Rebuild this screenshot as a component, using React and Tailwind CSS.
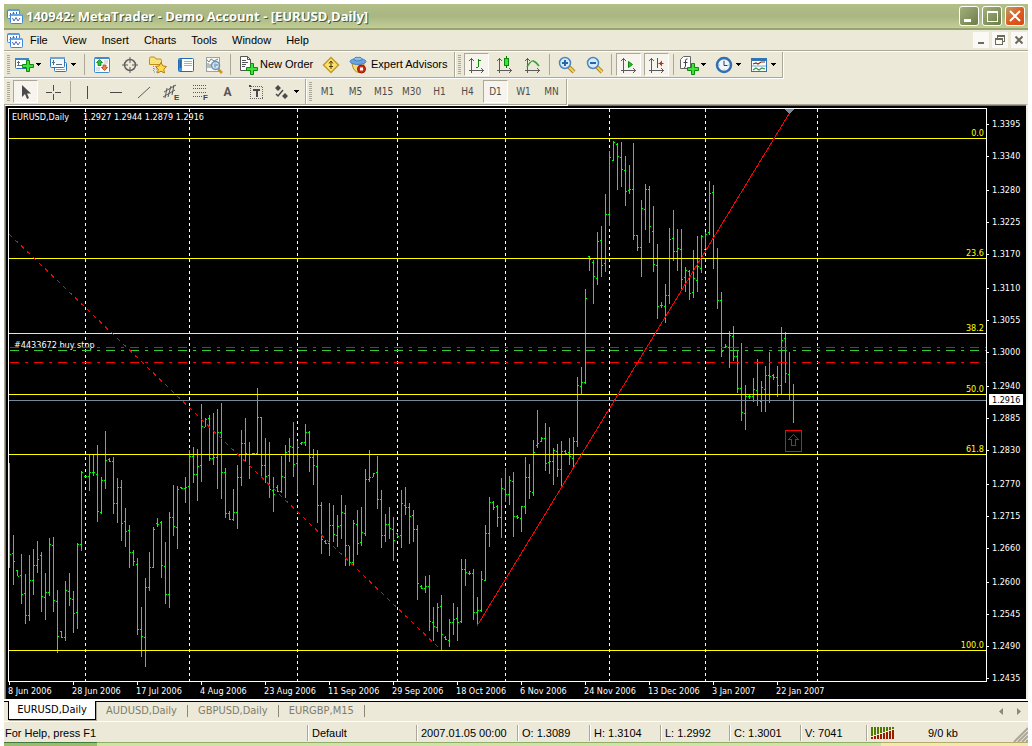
import { useState } from 'react';
import clsx from 'clsx';

// [high, low, open, close] for every daily bar, in chart pixels, oldest first. 0 = no tick
const BARS = [
  [463,568,0,554],[535,585,553,561],[570,576,570,576],[554,604,575,594],[574,624,593,615],[555,621,615,580],
  [549,595,580,565],[541,573,565,559],[552,612,555,596],[573,620,597,592],[538,596,592,544],[537,612,545,600],
  [590,653,601,636],[631,638,631,637],[581,641,637,590],[573,606,591,598],[591,633,599,613],[543,629,612,544],
  [471,551,544,472],[476,477,476,476],[455,491,476,472],[455,476,472,472],[445,522,474,511],[477,514,512,480],
  [431,489,480,460],[458,462,459,461],[457,514,461,503],[478,523,503,487],[480,541,487,523],[508,547,521,531],
  [525,568,530,552],[550,566,552,561],[558,635,564,629],[607,657,629,636],[578,667,637,587],[552,591,587,567],
  [527,568,567,529],[518,527,523,524],[521,578,522,565],[542,604,566,594],[512,608,594,517],[485,536,517,526],
  [486,549,527,489],[487,489,487,488],[477,503,488,487],[450,514,486,456],[447,483,456,474],[449,501,474,466],
  [404,482,465,426],[418,427,427,419],[415,461,418,458],[413,465,458,457],[409,489,457,432],[403,499,432,472],
  [468,518,472,513],[511,520,513,519],[489,521,519,512],[465,529,512,477],[430,486,477,443],[418,461,443,453],
  [442,479,454,454],[453,454,453,453],[388,454,453,417],[417,477,417,465],[438,483,465,476],[442,498,475,489],
  [477,512,490,494],[485,492,487,491],[456,493,491,476],[445,498,477,452],[438,462,451,446],[422,477,447,464],
  [441,494,463,447],[442,445,443,442],[424,446,442,432],[431,472,432,457],[449,485,457,465],[450,523,466,505],
  [502,554,505,539],[540,544,541,543],[503,556,543,525],[505,542,525,534],[515,547,535,526],[495,539,525,512],
  [505,566,513,545],[546,566,545,562],[520,566,562,523],[510,555,524,543],[507,546,542,532],[469,536,533,479],
  [450,482,479,477],[473,477,477,473],[456,509,472,499],[490,548,499,535],[514,542,535,524],[507,539,524,528],
  [517,561,529,540],[533,537,533,536],[490,548,535,503],[487,515,505,507],[503,544,507,516],[510,542,515,529],
  [525,600,529,583],[585,589,586,588],[576,593,588,586],[575,631,586,621],[607,641,622,626],[603,632,627,607],
  [595,650,606,634],[636,640,637,639],[619,647,640,622],[603,635,622,619],[607,641,618,622],[559,623,621,569],
  [559,586,569,572],[571,575,573,573],[569,620,573,612],[597,626,612,610],[571,612,610,579],[525,581,580,533],
  [497,547,533,502],[501,510,502,507],[505,527,506,517],[478,538,517,488],[468,502,489,494],[476,505,494,480],
  [472,537,481,516],[515,519,516,517],[506,532,518,506],[457,514,506,477],[464,499,477,491],[440,496,492,452],
  [410,448,445,443],[437,442,441,438],[423,471,438,463],[427,474,462,461],[448,485,461,450],[444,477,451,469],
  [441,487,469,451],[450,454,451,453],[438,465,452,456],[437,468,458,441],[377,447,441,385],[367,394,386,382],
  [289,384,382,298],[256,271,256,259],[260,304,262,276],[232,285,278,241],[226,277,240,265],[194,272,263,214],
  [151,226,214,157],[141,161,160,142],[143,190,144,156],[142,187,157,169],[156,206,170,191],[165,194,190,189],
  [143,240,189,235],[235,251,235,247],[200,277,247,208],[184,230,209,189],[186,243,189,226],[206,272,231,264],
  [244,319,265,306],[302,308,305,305],[284,323,306,295],[228,304,295,239],[210,261,238,251],[229,271,251,248],
  [229,290,249,279],[267,292,277,270],[270,300,271,293],[250,298,292,278],[236,292,280,266],[235,273,268,236],
  [232,249,249,234],[181,235,232,193],[185,269,192,0],[248,309,0,300],[292,357,300,351],[344,348,347,346],
  [331,368,347,335],[326,361,336,356],[351,393,356,388],[343,421,388,412],[385,430,413,396],[394,399,396,396],
  [378,402,396,389],[359,406,390,400],[381,412,401,387],[366,412,389,375],[352,403,375,376],[374,380,375,377],
  [366,397,377,385],[327,394,385,340],[332,383,338,373],[352,400,374,400],[384,423,0,400],
];

const MONTHS = [85, 189, 297, 397, 505, 609, 705, 817];
const FIBS = [[138, '0.0'], [258, '23.6'], [333, '38.2'], [394, '50.0'], [454, '61.8'], [650, '100.0']];
const PRICES = [
  [124, '1.3395'], [156, '1.3340'], [190, '1.3280'], [222, '1.3225'], [254, '1.3170'], [288, '1.3110'],
  [320, '1.3055'], [352, '1.3000'], [386, '1.2940'], [418, '1.2885'], [450, '1.2830'], [484, '1.2770'],
  [516, '1.2715'], [548, '1.2660'], [582, '1.2600'], [614, '1.2545'], [646, '1.2490'], [678, '1.2435'],
];
const DATES = [
  '8 Jun 2006', '28 Jun 2006', '17 Jul 2006', '4 Aug 2006', '23 Aug 2006', '11 Sep 2006', '29 Sep 2006',
  '18 Oct 2006', '6 Nov 2006', '24 Nov 2006', '13 Dec 2006', '3 Jan 2007', '22 Jan 2007',
];
const MENUS = ['File', 'View', 'Insert', 'Charts', 'Tools', 'Window', 'Help'];
const FRAMES = ['M1', 'M5', 'M15', 'M30', 'H1', 'H4', 'D1', 'W1', 'MN'];
const TABS = ['EURUSD,Daily', 'AUDUSD,Daily', 'GBPUSD,Daily', 'EURGBP,M15'];

const barPath = BARS.map(([h, l, o, c], i) => {
  const x = 9 + i * 4;
  let d = `M${x} ${h}h1V${l}h-1z`;
  if (o) d += `M${x - 1} ${o}h1v1h-1z`;
  if (c) d += `M${x + 1} ${c}h1v1h-1z`;
  return d;
}).join('');

/* ---------- toolbar pieces ---------- */

function Grip() {
  return (
    <div className="flex h-[19px] w-[3px] flex-col justify-between">
      {Array.from({ length: 10 }, (_, i) => <i key={i} className="h-px bg-[#aca899]" />)}
    </div>
  );
}

function Sep() {
  return <div className="mx-px h-[21px] w-px bg-[#aca899]" />;
}

function Icon({ children, crisp }) {
  return (
    <svg width="20" height="20" viewBox="0 0 20 20" fill="none" shapeRendering={crisp ? 'crispEdges' : 'auto'} className="shrink-0">
      {children}
    </svg>
  );
}

function ToolButton({ label, pressed, onClick, children }) {
  return (
    <button
      type="button"
      aria-label={label}
      aria-pressed={pressed}
      onClick={onClick}
      className={clsx(
        'flex h-[23px] w-[25px] items-center justify-center border',
        pressed ? 'border-t-[#aca899] border-l-[#aca899] border-r-white border-b-white bg-[#f6f4ec]' : 'border-transparent'
      )}
    >
      {children}
    </button>
  );
}

function DropButton({ label, children }) {
  return (
    <button type="button" aria-label={label} className="flex h-[23px] w-8 items-center pl-px">
      {children}
      <svg width="8" height="4" viewBox="0 0 8 4" shapeRendering="crispEdges"><path d="M2 0h5v1h-1v1h-1v1h-1v-1h-1v-1h-1z" fill="#000" /></svg>
    </button>
  );
}

function Strip({ children }) {
  return (
    <div className="flex h-[26px] items-center gap-[3px] border-r border-b border-[#aca899] pr-[2px] pl-[3px] shadow-[1px_1px_0_#fff]">
      {children}
    </div>
  );
}

// x/y arrows shared by the chart type icons
function Axes() {
  return (
    <path
      d="M4 3h1v12h12v1H5v2H4v-2H2v-1h2zM3 4h3v1H3zM2 5h1v1H2zM6 5h1v1H6zM15 14h1v3h-1zM14 13h1v1h-1zM14 17h1v1h-1z"
      fill="#5a5a5a"
      shapeRendering="crispEdges"
    />
  );
}

function Plus({ y = 0 }) {
  return (
    <path
      d="M12.500 8.500h3v4h4v3h-4v4h-3v-4h-4v-3h4z"
      transform={`translate(0 ${y})`}
      fill="#3fe03f"
      stroke="#0b8a0b"
    />
  );
}

function AppLogo() {
  return (
    <svg width="16" height="16" viewBox="0 0 16 16" className="shrink-0">
      <rect x=".5" y="1.500" width="12" height="9" rx="1" fill="#fff" stroke="#3f86d6" />
      <path d="M1 2h11" stroke="#5a9be6" strokeWidth="2" />
      <path d="M3.500 5v4M2.500 7.500h2M6.500 4v3M5.500 5.500h2M9.500 4v2" stroke="#4f5fb0" />
      <rect x="3.500" y="6.500" width="12" height="9" rx="1" fill="#fff" stroke="#3f86d6" />
      <path d="M4 7h11" stroke="#65a7ec" strokeWidth="2" />
      <path d="M5.500 10l1.500 3 2-3.500 2 3.500 2-3" stroke="#4a68b8" fill="none" />
    </svg>
  );
}

/* ---------- window chrome ---------- */

function TitleBar() {
  const button = 'flex size-5 items-center justify-center rounded-[3px] border border-white';
  return (
    <header className="flex h-[26px] items-center justify-between border-b-2 border-[#95a570] bg-linear-to-b from-[#b3bf88] via-[#a9b681] to-[#c3cd96] pr-[3px] pl-[3px]">
      <div className="flex items-center gap-[3px]">
        <AppLogo />
        <h1 className="font-['Open_Sans','Noto_Sans',sans-serif] text-[13px] leading-5 font-bold whitespace-nowrap text-white [text-shadow:1px_1px_0_#4b5930]">
          140942: MetaTrader - Demo Account - [EURUSD,Daily]
        </h1>
      </div>
      <div className="flex gap-[3px]">
        <button type="button" aria-label="Minimize" className={clsx(button, 'bg-linear-to-br from-[#a4b07c] to-[#6c7d4a]')}>
          <svg width="18" height="18" shapeRendering="crispEdges"><path d="M4 12h7v3H4z" fill="#fff" /></svg>
        </button>
        <button type="button" aria-label="Maximize" className={clsx(button, 'bg-linear-to-br from-[#a4b07c] to-[#6c7d4a]')}>
          <svg width="18" height="18" shapeRendering="crispEdges"><path d="M4 4h11v11H4zM5 6v8h9V6z" fill="#fff" fillRule="evenodd" /></svg>
        </button>
        <button type="button" aria-label="Close" className={clsx(button, 'bg-linear-to-br from-[#b8a060] via-[#dc5a20] to-[#d84a10]')}>
          <svg width="18" height="18"><path d="M4 4l10 10M14 4L4 14" stroke="#fff" strokeWidth="2" /></svg>
        </button>
      </div>
    </header>
  );
}

function MenuBar() {
  const button = 'flex size-4 items-center justify-center bg-[#faf9f5]';
  return (
    <div className="flex h-[21px] items-center justify-between border-b border-[#aca899] pr-px pl-[3px] shadow-[0_1px_0_#fff]">
      <nav className="flex items-center">
        <AppLogo />
        <div className="flex gap-px">
          {MENUS.map((name) => (
            <button key={name} type="button" className="px-[7px] leading-4">{name}</button>
          ))}
        </div>
      </nav>
      <div className="flex gap-[3px]">
        <button type="button" aria-label="Minimize chart" className={button}>
          <svg width="16" height="16" shapeRendering="crispEdges"><path d="M5 10h6v2H5z" fill="#6d6a5e" /></svg>
        </button>
        <button type="button" aria-label="Restore chart" className={button}>
          <svg width="16" height="16" shapeRendering="crispEdges" fill="#6d6a5e">
            <path d="M5 3h8v7h-2V9h1V5H6v1H5zM3 6h8v7H3zM4 8v4h6V8z" fillRule="evenodd" />
          </svg>
        </button>
        <button type="button" aria-label="Close chart" className={button}>
          <svg width="16" height="16"><path d="M4.500 4.500l7 7M11.500 4.500l-7 7" stroke="#6d6a5e" strokeWidth="2" /></svg>
        </button>
      </div>
    </div>
  );
}

function MainToolbar() {
  return (
    <div className="flex pt-px">
      <Strip>
        <Grip />
        <DropButton label="New chart">
          <Icon>
            <rect x="1.500" y="3.500" width="13" height="10" rx="1" fill="#fff" stroke="#2f74b5" />
            <path d="M1 4h14" stroke="#3f86c6" strokeWidth="2" />
            <path d="M4.500 6v5M3 7.500h3M3 10.500h6" stroke="#5b6b80" />
            <Plus y={-3} />
          </Icon>
        </DropButton>
        <DropButton label="Profiles">
          <Icon>
            <rect x="5.500" y="7.500" width="12" height="9" rx="1" fill="#fff" stroke="#2f74b5" />
            <path d="M7 14.500h9" stroke="#7ba9d6" />
            <rect x="1.500" y="2.500" width="14" height="10" rx="1" fill="#f4f9ff" stroke="#2f74b5" />
            <path d="M1 3h15" stroke="#6aa6dc" strokeWidth="2" />
            <path d="M4.500 5v5M3 7.500h3M7 9.500h6" stroke="#5b6b80" />
          </Icon>
        </DropButton>
        <Sep />
        <ToolButton label="Market Watch">
          <Icon>
            <rect x="2.500" y="2.500" width="15" height="15" rx="1" fill="#fff" stroke="#3b8ad8" />
            <path d="M3 3h14" stroke="#3b8ad8" strokeWidth="2" />
            <path d="M12 6h4M12 8h4M4 13h4M4 15h4" stroke="#b9c3cd" />
            <path d="M7.500 4.500l3 3H9v3H6v-3H4.500z" fill="#2fbf3a" stroke="#0d7a18" strokeWidth=".8" />
            <path d="M11 10h3v2.500h1.500l-3 3-3-3H11z" fill="#f0814a" stroke="#b93d12" strokeWidth=".8" />
          </Icon>
        </ToolButton>
        <ToolButton label="Data Window">
          <Icon>
            <circle cx="10" cy="10" r="5.500" stroke="#5f5f5f" strokeWidth="1.500" />
            <path d="M10 2v6M10 12v6M2 10h6M12 10h6" stroke="#5f5f5f" />
          </Icon>
        </ToolButton>
        <ToolButton label="Navigator">
          <Icon>
            <path d="M1.500 3.500q0-1.500 1.500-1.500h3.500l1.500 2h4q1.500 0 1.500 1.500v4h-12z" fill="#fbe37c" stroke="#c08d1c" />
            <path d="M5.500 11v6M6 14h4M6 17h3" stroke="#8f8f8f" strokeDasharray="1 1" />
            <path d="M13 7.500l1.800 3.400 3.700.6-2.700 2.700.6 3.800-3.400-1.800-3.400 1.800.6-3.800-2.700-2.700 3.700-.6z" fill="#ffdd4a" stroke="#b77a17" />
          </Icon>
        </ToolButton>
        <ToolButton label="Terminal">
          <Icon>
            <rect x="2.500" y="3.500" width="15" height="13" rx="1" fill="#fff" stroke="#1f6cb8" />
            <path d="M3 4h3v12H3z" fill="#3c98e4" />
            <path d="M3.500 6h2M3.500 8h2M3.500 10h2M3.500 12h2" stroke="#10344f" />
            <path d="M8 6.500h8M8 8.500h8M8 10.500h8" stroke="#9fb1d8" />
          </Icon>
        </ToolButton>
        <ToolButton label="Strategy Tester">
          <Icon>
            <rect x="2.500" y="2.500" width="13" height="14" fill="#f7f7f3" stroke="#9aa3a8" />
            <path d="M3 5l2 2 2-3 3 2 4-2M4 8v5M6 9v4" stroke="#78838c" />
            <path d="M14 14l4 4" stroke="#c9962a" strokeWidth="2.500" />
            <circle cx="11.500" cy="10.500" r="4" fill="#cfe6f7" stroke="#6b93b5" strokeWidth="1.500" />
            <path d="M11 8.500v4M13 9v2" stroke="#5b7d99" />
          </Icon>
        </ToolButton>
        <Sep />
        <button type="button" className="flex h-[23px] w-20 items-center gap-[2px] pl-[3px] whitespace-nowrap">
          <Icon>
            <path d="M2.500 1.500h7l3 3v11h-10z" fill="#fff" stroke="#555" />
            <path d="M9.500 1.500v3h3M4 5.500h4M4 7.500h6M4 9.500h4M4 11.500h3" stroke="#555" />
            <Plus />
          </Icon>
          New Order
        </button>
        <ToolButton label="MetaEditor">
          <Icon>
            <path d="M10 2.500l7.500 7.500-7.500 7.500L2.500 10z" fill="#fbe270" stroke="#c19a2a" strokeWidth="1.500" />
            <path d="M10 6v8M8 8.500l2-2.500 2 2.500M8 11.500h4" stroke="#4d3a00" />
          </Icon>
        </ToolButton>
        <button type="button" className="flex h-[23px] items-center gap-[3px] pr-[5px] pl-[2px] whitespace-nowrap">
          <Icon>
            <path d="M4 8q1 9 7 9.500 5-1 5-9z" fill="#f8dc70" stroke="#b98d1d" />
            <ellipse cx="10" cy="6.500" rx="8" ry="3" fill="#6da4dd" stroke="#4a82c0" />
            <path d="M6 5q0-3.500 4-2.500 4-1 4 2.500-4 2-8 0z" fill="#8dbdf0" stroke="#4a82c0" />
            <circle cx="13.500" cy="14" r="4" fill="#d92a12" stroke="#931705" />
            <rect x="12" y="12.500" width="3" height="3" fill="#fff" />
          </Icon>
          Expert Advisors
        </button>
      </Strip>
      <Strip>
        <Grip />
        <ToolButton label="Bar chart" pressed>
          <Icon><Axes /><path d="M11 4h1v1h2v1h-2v6h-1v1H9v-1h2z" fill="#0b8a0b" shapeRendering="crispEdges" /></Icon>
        </ToolButton>
        <ToolButton label="Candlesticks">
          <Icon><Axes /><path d="M11.500 1v12" stroke="#0b6e0b" /><rect x="9.500" y="3.500" width="4" height="7" fill="#3ee03e" stroke="#0b8a0b" /></Icon>
        </ToolButton>
        <ToolButton label="Line chart">
          <Icon><Axes /><path d="M4 12q4-7 6.500-6T16 11" stroke="#3f9a3f" strokeWidth="1.500" /></Icon>
        </ToolButton>
        <Sep />
        <ToolButton label="Zoom in">
          <Icon>
            <path d="M12 12l5 5" stroke="#b08a2c" strokeWidth="4" /><path d="M12 12l5 5" stroke="#f3d25d" strokeWidth="2" />
            <circle cx="8" cy="8" r="5.500" fill="#d6eafb" stroke="#4a86c4" strokeWidth="1.500" />
            <path d="M5 8h6M8 5v6" stroke="#2767a8" strokeWidth="2" />
          </Icon>
        </ToolButton>
        <ToolButton label="Zoom out">
          <Icon>
            <path d="M12 12l5 5" stroke="#b08a2c" strokeWidth="4" /><path d="M12 12l5 5" stroke="#f3d25d" strokeWidth="2" />
            <circle cx="8" cy="8" r="5.500" fill="#d6eafb" stroke="#4a86c4" strokeWidth="1.500" />
            <path d="M5 8h6" stroke="#2767a8" strokeWidth="2" />
          </Icon>
        </ToolButton>
        <Sep />
        <ToolButton label="Auto scroll" pressed>
          <Icon><Axes /><path d="M9.500 6.500l4 3-4 3z" fill="#25c425" stroke="#0b8a0b" /></Icon>
        </ToolButton>
        <ToolButton label="Chart shift" pressed>
          <Icon><Axes /><path d="M10.500 3v10" stroke="#1c5f9e" /><path d="M11.500 8.500h5" stroke="#a5311a" /><path d="M12 8.500l3-3v6z" fill="#b5361a" /></Icon>
        </ToolButton>
        <Sep />
        <DropButton label="Indicators">
          <Icon>
            <path d="M1.500 4.500l3-3h7v12h-10z" fill="#fff" stroke="#666" />
            <path d="M8.500 4q-2-.5-2 2v5.500q0 1-1.500 1M4.500 7.500h4" stroke="#444" />
            <Plus />
          </Icon>
        </DropButton>
        <DropButton label="Periodicity">
          <Icon>
            <circle cx="10" cy="10" r="7" fill="#eef5fc" stroke="#2f6fb2" strokeWidth="2.500" />
            <path d="M10 6v4.500h3.500" stroke="#33414e" /><path d="M10 4.500v1M10 14.500v1M4.500 10h1M14.500 10h1" stroke="#888" />
          </Icon>
        </DropButton>
        <DropButton label="Templates">
          <Icon>
            <rect x="2.500" y="3.500" width="15" height="13" fill="#fff" stroke="#2f74b5" />
            <path d="M2 4.500h16" stroke="#2f74b5" strokeWidth="3" /><path d="M3 11h14" stroke="#6aa6dc" />
            <path d="M4 9l3-1 2 1 3-2 4 0" stroke="#8b2b12" strokeWidth="1.200" /><path d="M4 15l3-2 3 2 3-2 3 1" stroke="#2f9a3a" strokeWidth="1.200" />
          </Icon>
        </DropButton>
      </Strip>
    </div>
  );
}

function DrawingToolbar({ frame, onFrame }) {
  return (
    <div className="flex pt-px">
      <Strip>
        <Grip />
        <ToolButton label="Cursor" pressed>
          <Icon><path d="M6 3v12l3-3 2 5 2-1-2-4.500h4z" fill="#4a4a4a" /></Icon>
        </ToolButton>
        <ToolButton label="Crosshair">
          <Icon crisp><path d="M9.500 3v6M9.500 12v6M2 10.500h6M11 10.500h6" stroke="#4a4a4a" /></Icon>
        </ToolButton>
        <Sep />
        <ToolButton label="Vertical line">
          <Icon crisp><path d="M9.500 4v13" stroke="#4a4a4a" /></Icon>
        </ToolButton>
        <ToolButton label="Horizontal line">
          <Icon crisp><path d="M4 10.500h12" stroke="#4a4a4a" /></Icon>
        </ToolButton>
        <ToolButton label="Trendline">
          <Icon><path d="M4 16L16 5" stroke="#5a5a5a" /></Icon>
        </ToolButton>
        <ToolButton label="Equidistant channel">
          <Icon>
            <path d="M2 10l12-7M1 15l12-7M5 6L3 16M9 4L6 15M12 3l-2 10" stroke="#5a5a5a" />
            <text x="12" y="18" fontSize="8" fill="#444" fontWeight="bold">E</text>
          </Icon>
        </ToolButton>
        <ToolButton label="Fibonacci retracement">
          <Icon crisp>
            <path d="M3 3.500h14M3 6.500h14M3 10.500h14M3 14.500h9" stroke="#5a5a5a" strokeDasharray="1 1" />
            <text x="13" y="18" fontSize="8" fill="#444" fontWeight="bold">F</text>
          </Icon>
        </ToolButton>
        <ToolButton label="Text">
          <span className="font-[Roboto,sans-serif] text-[12px] font-bold text-[#555]">A</span>
        </ToolButton>
        <ToolButton label="Text label">
          <Icon crisp>
            <rect x="4.500" y="4.500" width="12" height="12" stroke="#666" strokeDasharray="1 1" />
            <path d="M3 3h2v2H3z M7 7h7v2H7zM9.500 7h2v8h-2z" fill="#4a4a4a" />
          </Icon>
        </ToolButton>
        <DropButton label="Arrows">
          <Icon>
            <path d="M6 3l3 3-3 3-3-3zM13 11l3 3-3 3-3-3z" fill="#4a4a4a" />
            <path d="M4 12l2 2 5-6" stroke="#4a4a4a" strokeWidth="1.500" />
          </Icon>
        </DropButton>
      </Strip>
      <Strip>
        <Grip />
        {FRAMES.map((name) => (
          <ToolButton key={name} label={name} pressed={name === frame} onClick={() => onFrame(name)}>
            <span className="font-['DejaVu_Sans_Condensed','DejaVu_Sans',sans-serif] text-[10px] text-[#4d4d4d]">{name}</span>
          </ToolButton>
        ))}
      </Strip>
    </div>
  );
}

/* ---------- chart ---------- */

function Chart() {
  return (
    <main className="-mt-px border-t border-r-2 border-l border-[#aca899] border-r-[#f1efe2]">
      <div className="flex border-t border-l border-[#716f64] bg-black pt-[2px] pl-[2px] font-['DejaVu_Sans_Condensed','DejaVu_Sans',sans-serif] text-[9px]">
        <div className="min-w-0 flex-1">
          <div className="border border-white">
            <svg className="block h-[572px] w-full" shapeRendering="crispEdges" role="img" aria-label="EURUSD daily bar chart">
              <g transform="translate(-9 -109)">
                {MONTHS.map((x) => (
                  <path key={x} d={`M${x}.5 109V681`} stroke="#fff" strokeDasharray="3 3" />
                ))}
                <path d={barPath} fill="#0f0" />
                <text x="12" y="120" fill="#fff">EURUSD,Daily</text>
                <text x="83" y="120" fill="#fff">1.2927 1.2944 1.2879 1.2916</text>
                <text x="14" y="348" fill="#fff">#4433672 buy stop</text>
              </g>
              {FIBS.map(([y, label]) => (
                <g key={label}>
                  <rect y={y - 109} width="100%" height="1" fill="#ff0" />
                  <text x="100%" dx="-2" y={y - 111} textAnchor="end" fill="#ff0">{label}</text>
                </g>
              ))}
              <rect y="291" width="100%" height="1" fill="#778899" />
              <g strokeDasharray="9 6 3 6">
                <line x1="1" y1="238.500" x2="100%" y2="238.500" stroke="#f00" />
                <line x1="1" y1="241.500" x2="100%" y2="241.500" stroke="#32cd32" />
                <line x1="1" y1="253.500" x2="100%" y2="253.500" stroke="#f00" />
              </g>
              <g transform="translate(-9 -109)" fill="none" stroke="#f00">
                <path d="M9 234L441 650" pathLength="432" strokeDasharray="3 3" />
                <path d="M477 626L792 109" />
                <rect x="785.500" y="430.500" width="16" height="21" />
                <path d="M793.500 434.500l5 5h-3v6h-4v-6h-3z" />
                <path d="M785 109h9l-4 5h-1z" fill="#778899" stroke="none" />
              </g>
            </svg>
          </div>
          <svg className="block h-[17px] w-full" shapeRendering="crispEdges">
            {DATES.map((date, i) => (
              <g key={date} fill="#fff">
                <rect x={1 + i * 64} width="1" height="3" />
                <text x={i * 64} y="12">{date}</text>
              </g>
            ))}
          </svg>
        </div>
        <svg className="w-[39px] shrink-0" shapeRendering="crispEdges">
          <g transform="translate(-987 -108)">
            {PRICES.map(([y, price]) => (
              <g key={price} fill="#fff">
                <rect x="987" y={y} width="2" height="1" />
                <text x="992" y={y + 3}>{price}</text>
              </g>
            ))}
            <rect x="989" y="394" width="34" height="11" fill="#fff" />
            <text x="992" y="403" fill="#000">1.2916</text>
          </g>
        </svg>
      </div>
    </main>
  );
}

function ChartTabs({ active, onSelect }) {
  return (
    <div className="flex h-[23px] border-t-2 border-b border-white font-['DejaVu_Sans_Condensed','DejaVu_Sans',sans-serif]">
      <div className="flex h-5 flex-1 items-start border-t border-black pl-1">
        {TABS.map((name) =>
          name === active ? (
            <button key={name} type="button" className="-mt-px h-[19px] w-[88px] border border-t-0 border-black bg-white leading-4 shadow-[1px_1px_0_#aca899]">
              {name}
            </button>
          ) : (
            <button
              key={name}
              type="button"
              onClick={() => onSelect(name)}
              className="mt-[3px] h-3 border-r border-[#8b8878] px-[10px] leading-3 text-[#7f7c6c]"
            >
              {name}
            </button>
          )
        )}
        <svg width="24" height="8" className="mt-[6px] mr-[5px] ml-auto" fill="#8b8878"><path d="M4 0v7L0 3.500zM18 0v7l4-3.500z" /></svg>
      </div>
    </div>
  );
}

function StatusBar() {
  const cell = 'h-4 border-l border-[#aca899] pl-1 leading-4 shadow-[inset_1px_0_0_#fff]';
  return (
    <footer className="flex h-5 items-center pt-px whitespace-nowrap">
      <div className="h-4 min-w-0 flex-1 pl-px leading-4">For Help, press F1</div>
      <div className={clsx(cell, 'w-[109px]')}>Default</div>
      <div className={clsx(cell, 'w-[101px]')}>2007.01.05 00:00</div>
      <div className={clsx(cell, 'w-[72px]')}>O: 1.3089</div>
      <div className={clsx(cell, 'w-[71px]')}>H: 1.3104</div>
      <div className={clsx(cell, 'w-[69px]')}>L: 1.2992</div>
      <div className={clsx(cell, 'w-[71px]')}>C: 1.3001</div>
      <div className={clsx(cell, 'w-[66px]')}>V: 7041</div>
      <div className={clsx(cell, 'flex w-[147px] items-center')}>
        <svg width="24" height="12" shapeRendering="crispEdges">
          {[0, 1, 2, 3, 4, 5, 6, 7].map((i) => (
            <g key={i}>
              <rect x={i * 3} width="2" height={9 - i} fill="#4f7a00" />
              <rect x={i * 3} y={10 - i} width="2" height={2 + i} fill="#9c1c00" />
            </g>
          ))}
        </svg>
        <span className="pl-[33px]">9/0 kb</span>
      </div>
      <svg width="15" height="15" className="mt-auto" stroke="#aca899" strokeWidth="2"><path d="M1 15L15 1M5 15L15 5M9 15l6-6M13 15l2-2" /></svg>
    </footer>
  );
}

export default function App() {
  const [frame, setFrame] = useState('D1');
  const [tab, setTab] = useState('EURUSD,Daily');

  return (
    <div className="min-h-screen bg-white pt-1 font-['Liberation_Sans',Arial,sans-serif] text-[11px] text-black">
      <div className="mx-1 bg-[#ece9d8]">
        <TitleBar />
        <MenuBar />
        <MainToolbar />
        <DrawingToolbar frame={frame} onFrame={setFrame} />
        <Chart />
        <ChartTabs active={tab} onSelect={setTab} />
        <StatusBar />
        {/* top edge of whatever window sits below */}
        <div className="flex h-1">
          <div className="w-[93px] border-t border-[#3f7a3a] bg-[#9dbb6c]" />
          <div className="flex-1 border-t border-[#8fae68] bg-[#d3e0a8]" />
          <div className="w-[147px] border-t border-[#b5ab6a] bg-[#f6e7b0]" />
        </div>
      </div>
    </div>
  );
}
